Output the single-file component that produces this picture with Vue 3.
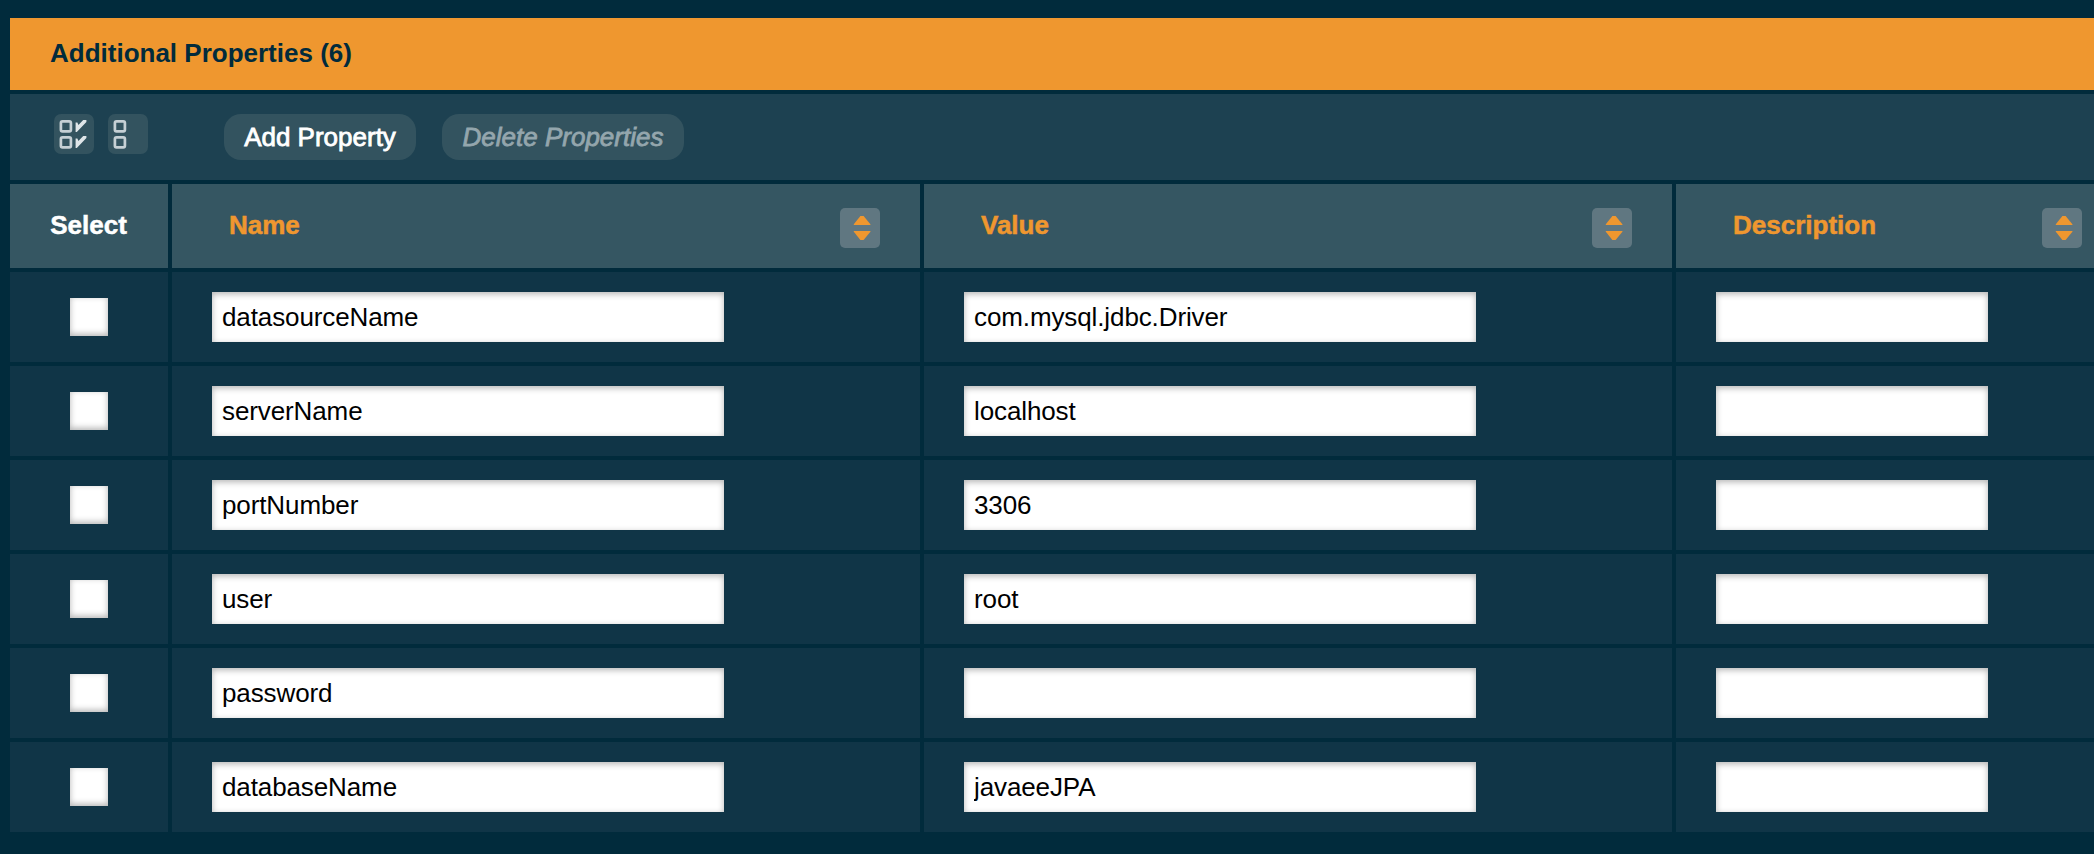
<script setup>
import { ref } from 'vue'

const columns = ['Name', 'Value', 'Description']
const rows = ref([
  { name: 'datasourceName', value: 'com.mysql.jdbc.Driver', description: '' },
  { name: 'serverName', value: 'localhost', description: '' },
  { name: 'portNumber', value: '3306', description: '' },
  { name: 'user', value: 'root', description: '' },
  { name: 'password', value: '', description: '' },
  { name: 'databaseName', value: 'javaeeJPA', description: '' },
])
</script>

<template>
  <main class="page">
    <section class="table">
      <h2 class="title">Additional Properties (6)</h2>
      <div class="toolbar">
        <button class="icon-btn" aria-label="Select all">
          <svg width="40" height="40" viewBox="0 0 40 40">
            <g fill="none" stroke="#c6d0d5" stroke-width="2.7">
              <rect x="6.9" y="7.3" width="10" height="10" rx="1.6" />
              <rect x="6.9" y="23.3" width="10" height="10" rx="1.6" />
            </g>
            <g fill="#dfe5e8">
              <path d="M21.6 8.6H23.4L24.4 11L29.2 6H32.4V8L22.8 18H21.6Z" />
              <path d="M21.6 24.6H23.4L24.4 27L29.2 22H32.4V24L22.8 34H21.6Z" />
            </g>
          </svg>
        </button>
        <button class="icon-btn" aria-label="Deselect all">
          <svg width="40" height="40" viewBox="0 0 40 40">
            <g fill="none" stroke="#c6d0d5" stroke-width="2.7">
              <rect x="6.9" y="7.3" width="10" height="10" rx="1.6" />
              <rect x="6.9" y="23.3" width="10" height="10" rx="1.6" />
            </g>
          </svg>
        </button>
        <button class="btn add">Add Property</button>
        <button class="btn delete" disabled>Delete Properties</button>
      </div>
      <div class="row head">
        <div class="cell select">Select</div>
        <div v-for="c in columns" :key="c" class="cell sortable">
          <span>{{ c }}</span>
          <button class="sort" aria-label="Sort">
            <svg width="40" height="40" viewBox="0 0 40 40" fill="#ef972f">
              <path d="M20.4 8H23.6L30.4 16.2V17H13.8V16.2Z" />
              <path d="M13.8 23H30.4V23.8L23.6 32H20.4L13.8 23.8Z" />
            </svg>
          </button>
        </div>
      </div>
      <div v-for="(r, i) in rows" :key="i" class="row">
        <div class="cell select"><input class="check" type="checkbox" /></div>
        <div class="cell"><input v-model="r.name" class="field" type="text" spellcheck="false" /></div>
        <div class="cell"><input v-model="r.value" class="field" type="text" spellcheck="false" /></div>
        <div class="cell"><input v-model="r.description" class="field short" type="text" /></div>
      </div>
    </section>
  </main>
</template>

<style>
body {
  background: #012b3c;
}
</style>

<style scoped>
.page {
  box-sizing: border-box;
  height: 854px;
  padding: 18px 0 0 10px;
  overflow: hidden;
  background: #012b3c;
  font-family: "Liberation Sans", Arial, sans-serif;
  font-size: 26px;
  line-height: 30px;
}
.table {
  display: flex;
  flex-direction: column;
  gap: 4px;
  width: 2112px;
}
.title {
  box-sizing: border-box;
  height: 72px;
  margin: 0;
  padding: 20px 40px 0;
  background: #ef972f;
  color: #012b3c;
  font-size: 26px;
  font-weight: bold;
}
.toolbar {
  display: flex;
  align-items: flex-start;
  box-sizing: border-box;
  height: 86px;
  padding: 20px 44px 0;
  background: #1d4151;
}
button {
  border: 0;
  padding: 0;
  background: #33535f;
  font: inherit;
}
svg {
  display: block;
}
.icon-btn {
  width: 40px;
  height: 40px;
  margin-right: 14px;
  border-radius: 7px;
}
.btn {
  height: 46px;
  border-radius: 17px;
  -webkit-text-stroke: 0.8px currentColor;
}
.add {
  width: 192px;
  margin-left: 62px;
  color: #fff;
}
.delete {
  width: 242px;
  margin-left: 26px;
  color: #94a6ad;
  font-style: italic;
}
.row {
  display: grid;
  grid-template-columns: 158px 748px 748px 446px;
  gap: 4px;
  height: 90px;
}
.cell {
  display: flex;
  align-items: center;
  padding-left: 40px;
  background: #103547;
}
.select {
  justify-content: center;
  padding: 0;
}
.head {
  height: 84px;
  font-weight: bold;
  -webkit-text-stroke: 0.5px currentColor;
}
.head .cell {
  background: #355662;
  color: #fff;
}
.head .select {
  padding: 0 1px 2px 0;
}
.head .sortable {
  justify-content: space-between;
  padding: 0 40px 0 57px;
  color: #ef972f;
}
.sortable span {
  padding-bottom: 2px;
}
.sort {
  width: 40px;
  height: 40px;
  margin-top: 4px;
  border-radius: 5px;
  background: #607781;
}
.check {
  appearance: none;
  width: 38px;
  height: 38px;
  margin: 0;
  background: #fff;
  box-shadow: inset 0 -2px 6px rgba(0, 0, 0, 0.3);
}
.field {
  box-sizing: border-box;
  width: 512px;
  height: 50px;
  border: 0;
  padding: 0 10px;
  background: #fff;
  color: #000;
  font: inherit;
  letter-spacing: -0.11px;
  box-shadow: inset 0 2px 6px rgba(0, 0, 0, 0.3);
}
.short {
  width: 272px;
}
</style>
